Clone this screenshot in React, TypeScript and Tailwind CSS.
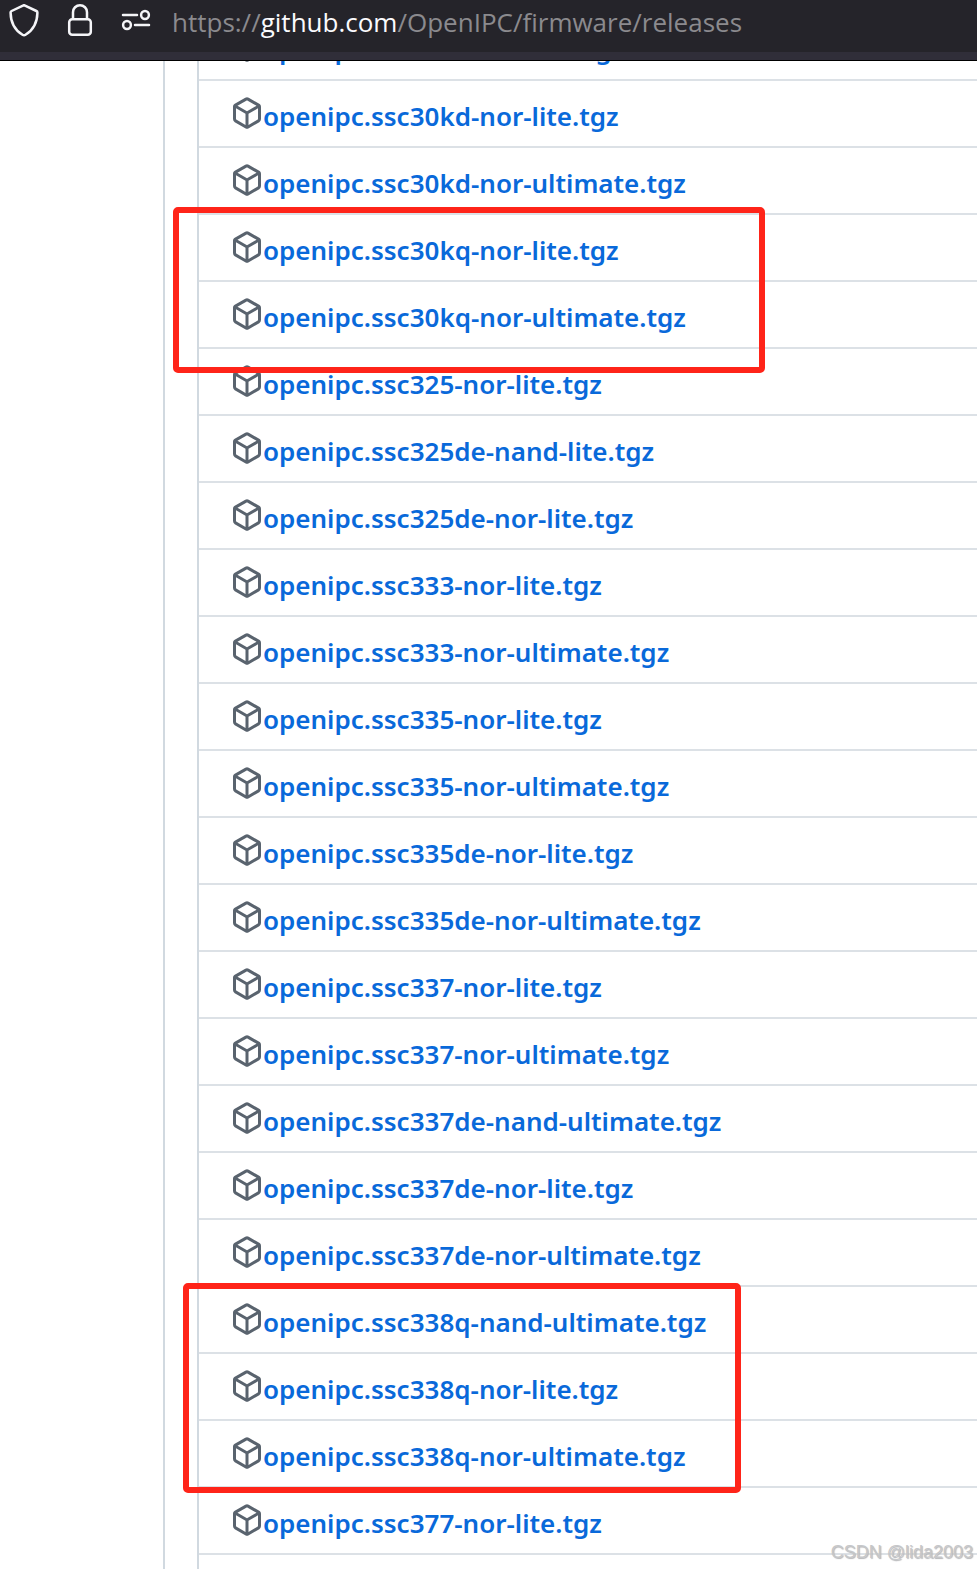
import { useState } from "react";

const assets = [
  "openipc.rv1126-nand-lite.tgz",
  "openipc.ssc30kd-nor-lite.tgz",
  "openipc.ssc30kd-nor-ultimate.tgz",
  "openipc.ssc30kq-nor-lite.tgz",
  "openipc.ssc30kq-nor-ultimate.tgz",
  "openipc.ssc325-nor-lite.tgz",
  "openipc.ssc325de-nand-lite.tgz",
  "openipc.ssc325de-nor-lite.tgz",
  "openipc.ssc333-nor-lite.tgz",
  "openipc.ssc333-nor-ultimate.tgz",
  "openipc.ssc335-nor-lite.tgz",
  "openipc.ssc335-nor-ultimate.tgz",
  "openipc.ssc335de-nor-lite.tgz",
  "openipc.ssc335de-nor-ultimate.tgz",
  "openipc.ssc337-nor-lite.tgz",
  "openipc.ssc337-nor-ultimate.tgz",
  "openipc.ssc337de-nand-ultimate.tgz",
  "openipc.ssc337de-nor-lite.tgz",
  "openipc.ssc337de-nor-ultimate.tgz",
  "openipc.ssc338q-nand-ultimate.tgz",
  "openipc.ssc338q-nor-lite.tgz",
  "openipc.ssc338q-nor-ultimate.tgz",
  "openipc.ssc377-nor-lite.tgz",
];

function ShieldIcon() {
  return (
    <svg width="32" height="34" viewBox="0 0 32 34" fill="none" stroke="currentColor" strokeWidth="2.5" strokeLinejoin="round">
      <path d="M16 2.2 28.4 8a1.8 1.8 0 0 1 1 1.7c-.1 8.5-2.800 16.500-11.900 22a2.800 2.800 0 0 1-3 0C5.400 26.200 2.700 18.200 2.600 9.700a1.800 1.800 0 0 1 1-1.700Z" />
    </svg>
  );
}

function LockIcon() {
  return (
    <svg width="26" height="34" viewBox="0 0 26 34" fill="none" stroke="currentColor" strokeWidth="2.5">
      <rect x="2.200" y="16.200" width="21.600" height="15.600" rx="3" />
      <path d="M6 16V9.200a7 7 0 0 1 14 0V16" />
    </svg>
  );
}

function PermissionsIcon() {
  return (
    <svg width="30" height="22" viewBox="0 0 30 22" fill="none" stroke="currentColor" strokeWidth="2.5" strokeLinecap="round">
      <path d="M2 6h14M14 16h14" />
      <circle cx="24" cy="6" r="3.900" />
      <circle cx="6" cy="16" r="3.900" />
    </svg>
  );
}

function PackageIcon() {
  return (
    <svg className="size-8 shrink-0 fill-[#59636e]" viewBox="0 0 16 16" aria-hidden="true">
      <path d="m8.878.392 5.25 3.045c.54.314.872.89.872 1.514v6.098a1.75 1.75 0 0 1-.872 1.514l-5.25 3.045a1.75 1.75 0 0 1-1.756 0l-5.25-3.045A1.75 1.75 0 0 1 1 11.049V4.951c0-.624.332-1.201.872-1.514L7.122.392a1.75 1.75 0 0 1 1.756 0ZM7.875 1.69l-4.63 2.685L8 7.133l4.755-2.758-4.63-2.685a.248.248 0 0 0-.25 0ZM2.5 5.677v5.372c0 .09.047.171.125.216l4.625 2.683V8.432Zm6.25 8.271 4.625-2.683a.25.25 0 0 0 .125-.216V5.677L8.75 8.432Z" />
    </svg>
  );
}

function AddressBar() {
  const [tracking, setTracking] = useState(true);

  return (
    <header className="shrink-0 border-b border-black bg-[#302e39] pb-2">
      <div className="flex h-[52px] items-start bg-[#25242a] pl-2 text-[#f5f5f8]">
        <button
          type="button"
          aria-label="Tracking protection"
          aria-pressed={tracking}
          onClick={() => setTracking(!tracking)}
          className="mt-[3px]"
        >
          <ShieldIcon />
        </button>
        <button type="button" aria-label="Connection secure" className="mt-[3px] ml-[27px]">
          <LockIcon />
        </button>
        <button type="button" aria-label="Site permissions" className="mt-[9px] ml-7">
          <PermissionsIcon />
        </button>
        <div className="ml-[21px] flex font-['Open_Sans',sans-serif] text-[26px] leading-[44px] whitespace-nowrap text-[#8b8a8e]">
          <span>https://</span>
          <span className="text-[#fbfbfe]">github.com</span>
          <span>/OpenIPC/firmware/releases</span>
        </div>
      </div>
    </header>
  );
}

export default function App() {
  return (
    <div className="flex h-screen flex-col overflow-hidden bg-white font-['Noto_Sans',sans-serif]">
      <AddressBar />
      <main className="relative min-h-0 flex-1 overflow-hidden">
        <div className="ml-[163px] border-l-2 border-[#d1d9e0] pl-8">
          {/* the list is scrolled, so its first row is cut by the toolbar */}
          <ul className="-mt-[49px] border-l-2 border-[#d1d9e0] after:block after:h-20 after:border-t-2 after:border-[#dce1e6]">
            {assets.map((name) => (
              <li key={name} className="flex h-[67px] items-center border-t-2 border-[#dce1e6] pb-0.5 pl-8">
                <PackageIcon />
                <a href={`#${name}`} className="pt-1.5 text-[26px] leading-9 font-semibold whitespace-nowrap text-[#0969da]">
                  {name}
                </a>
              </li>
            ))}
          </ul>
        </div>
        <div className="pointer-events-none absolute top-[146px] left-[173px] h-[166px] w-[592px] rounded-[5px] border-6 border-[#ff2419]" />
        <div className="pointer-events-none absolute top-[1222px] left-[183px] h-[210px] w-[558px] rounded-[5px] border-6 border-[#ff2419]" />
        <p className="absolute right-1 bottom-[3px] font-['Liberation_Sans',sans-serif] text-lg text-[#c6c7c9] text-shadow-[1px_1px_1px_#b4b5b7]">
          CSDN @lida2003
        </p>
      </main>
    </div>
  );
}
